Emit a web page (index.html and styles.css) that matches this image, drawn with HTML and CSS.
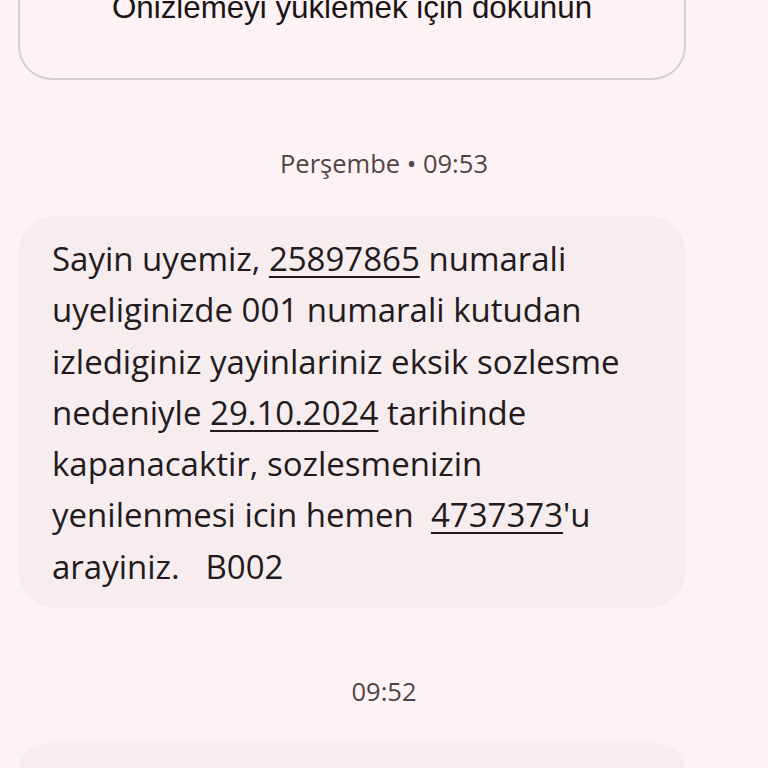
FILE: index.html
```html
<!DOCTYPE html>
<html lang="tr">
<head>
<meta charset="utf-8">
<link rel="stylesheet" href="styles.css">
</head>
<body>
<div class="thread">
  <div class="preview-card">
    <div class="preview-text">Önizlemeyi yüklemek için dokunun</div>
  </div>
  <div class="stamp stamp-first">Perşembe • 09:53</div>
  <div class="bubble"><p class="msg">Sayin uyemiz, <span class="link">25897865</span> numarali<br>uyeliginizde 001 numarali kutudan<br>izlediginiz yayinlariniz eksik sozlesme<br>nedeniyle <span class="link">29.10.2024</span> tarihinde<br>kapanacaktir, sozlesmenizin<br>yenilenmesi icin hemen  <span class="link">4737373</span>'u<br>arayiniz.   B002</p></div>
  <div class="stamp stamp-second">09:52</div>
  <div class="bubble bubble-next"></div>
</div>
</body>
</html>
```

FILE: styles.css
```css
html, body {
  margin: 0;
  padding: 0;
  background: #fdf3f4;
  overflow: hidden;
  height: 768px;
}
.thread {
  display: flex;
  flex-direction: column;
  padding: 0 82px 0 18px;
  font-family: "Open Sans", Roboto, sans-serif;
  color: #221a1c;
}
.preview-card {
  margin-top: -56px;
  height: 136px;
  border: 2px solid #d9cbce;
  border-top: none;
  border-radius: 0 0 34px 34px;
  box-sizing: border-box;
  display: flex;
  justify-content: center;
}
.preview-text {
  margin-top: 46px;
  font-family: "Liberation Sans", Arial, sans-serif;
  font-size: 31.3px;
  line-height: 36px;
  color: #1a1516;
}
.stamp {
  text-align: center;
  font-size: 25.5px;
  line-height: 30px;
  color: #514447;
  margin-right: -64px;
}
.stamp-first {
  margin-top: 68px;
}
.bubble {
  background: #f7ecee;
  border-radius: 38px;
  padding: 17px 34px 16px 34px;
}
.bubble-next {
  height: 60px;
  padding: 0;
}
.stamp-first + .bubble {
  margin-top: 38px;
}
.msg {
  margin: 0;
  font-size: 33px;
  line-height: 51.3px;
  white-space: pre-wrap;
  color: #221a1c;
}
.link {
  text-decoration: underline;
  text-decoration-thickness: 2px;
  text-underline-offset: 5px;
}
.stamp-second {
  margin-top: 68px;
}
.stamp-second + .bubble {
  margin-top: 37px;
}
```
